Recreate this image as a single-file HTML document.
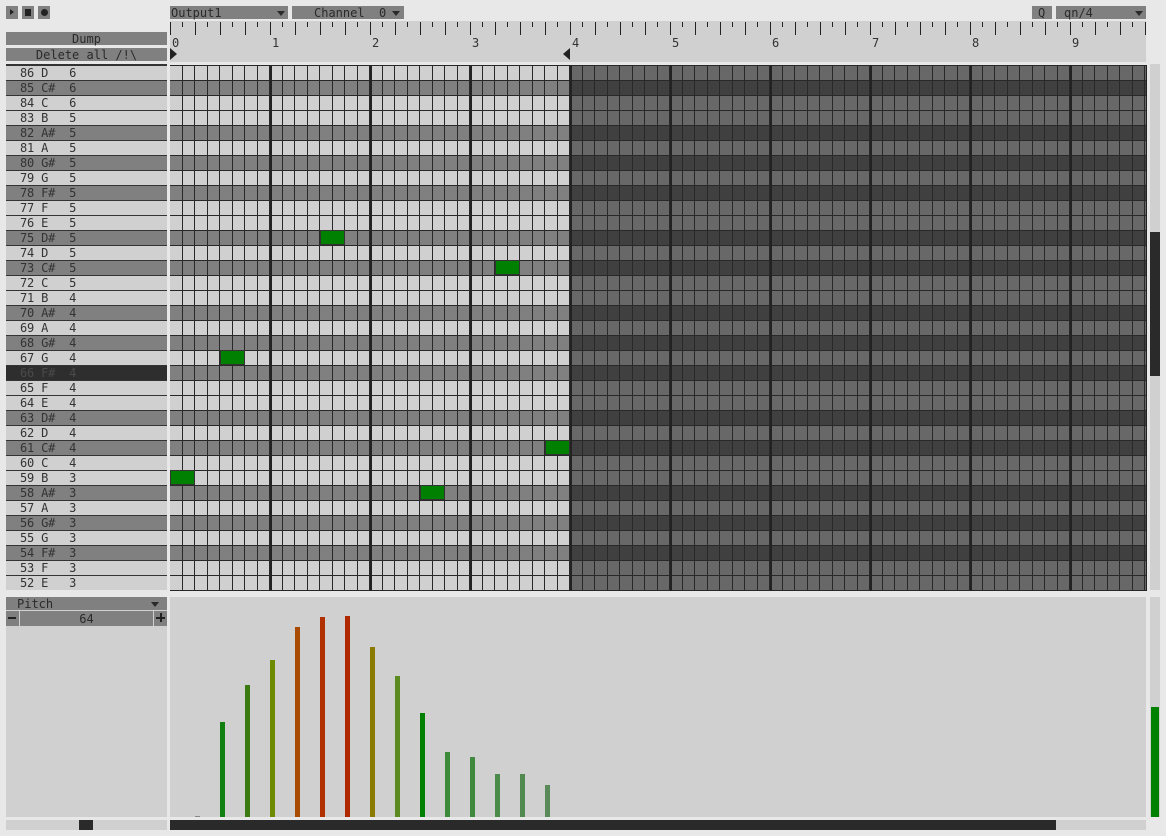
<!DOCTYPE html>
<html><head><meta charset="utf-8"><style>
*{margin:0;padding:0;box-sizing:border-box}
body{width:1166px;height:836px;background:#e8e8e8;position:relative;overflow:hidden;font-family:"DejaVu Sans Mono","Liberation Mono",monospace;font-size:12px;color:#333}
.a{position:absolute}
.btn{background:#808080;color:#2a2a2a;line-height:15px;white-space:pre}
.tri{position:absolute;width:0;height:0;border-left:4px solid transparent;border-right:4px solid transparent;border-top:5px solid #2a2a2a}
#labels div{height:15px;line-height:15px;border-top:1px solid #333;padding-left:14px;white-space:pre;letter-spacing:-0.2px}
.w{background:#d0d0d0}.b{background:#808080}.s{background:#2e2e2e;color:#4a4a4a}
#grid div{height:15px}
#grid .bl{position:absolute;top:0;width:2px;height:526px;background:#222}
.note{position:absolute;width:25px;height:16px;background:#008000;border:1px solid #333}
.bar{position:absolute;width:5px;bottom:19px}
</style></head><body>
<div class="a btn" style="left:6px;top:6px;width:12px;height:13px"><div class="a" style="left:4px;top:3px;border-top:3.5px solid transparent;border-bottom:3.5px solid transparent;border-left:4px solid #222"></div></div>
<div class="a btn" style="left:22px;top:6px;width:12px;height:13px"><div class="a" style="left:3px;top:3px;width:6px;height:7px;background:#222"></div></div>
<div class="a btn" style="left:38px;top:6px;width:12px;height:13px"><div class="a" style="left:3px;top:3px;width:7px;height:7px;border-radius:50%;background:#222"></div></div>
<div class="a btn" style="left:170px;top:6px;width:118px;height:13px;padding-left:1px">Output1</div><div class="tri" style="left:277px;top:11px"></div>
<div class="a btn" style="left:292px;top:6px;width:112px;height:13px;padding-left:22px">Channel  0</div><div class="tri" style="left:392px;top:11px"></div>
<div class="a btn" style="left:1032px;top:6px;width:20px;height:13px;padding-left:6px">Q</div>
<div class="a btn" style="left:1056px;top:6px;width:90px;height:13px;padding-left:8px">qn/4</div><div class="tri" style="left:1135px;top:11px"></div>
<div class="a btn" style="left:6px;top:32px;width:161px;height:13px;text-align:center">Dump</div>
<div class="a btn" style="left:6px;top:48px;width:161px;height:13px;text-align:center">Delete all /!\</div>
<div class="a" style="left:170px;top:21px;width:976px;height:41px;background:#d0d0d0"></div>
<div class="a" style="left:170px;top:22px;width:976px;height:5px;background:repeating-linear-gradient(90deg,#222 0 1px,transparent 1px 12px,#222 12px 13px,transparent 13px 25px)"></div>
<div class="a" style="left:170px;top:22px;width:976px;height:13px;background:repeating-linear-gradient(90deg,#222 0 1px,transparent 1px 25px)"></div>
<div class="a" style="left:172px;top:36px;width:976px;height:14px;white-space:pre"><span class="a" style="left:0">0</span><span class="a" style="left:100px">1</span><span class="a" style="left:200px">2</span><span class="a" style="left:300px">3</span><span class="a" style="left:400px">4</span><span class="a" style="left:500px">5</span><span class="a" style="left:600px">6</span><span class="a" style="left:700px">7</span><span class="a" style="left:800px">8</span><span class="a" style="left:900px">9</span></div>
<div class="a" style="left:170px;top:48px;border-top:6px solid transparent;border-bottom:6px solid transparent;border-left:7px solid #222"></div>
<div class="a" style="left:563px;top:48px;border-top:6px solid transparent;border-bottom:6px solid transparent;border-right:7px solid #222"></div>
<div class="a" style="left:6px;top:64px;width:161px;height:2px;background:#333"></div>
<div id="labels" class="a" style="left:6px;top:65px;width:161px">
<div class="w">86 D   6</div><div class="b">85 C#  6</div><div class="w">84 C   6</div><div class="w">83 B   5</div><div class="b">82 A#  5</div><div class="w">81 A   5</div><div class="b">80 G#  5</div><div class="w">79 G   5</div><div class="b">78 F#  5</div><div class="w">77 F   5</div><div class="w">76 E   5</div><div class="b">75 D#  5</div><div class="w">74 D   5</div><div class="b">73 C#  5</div><div class="w">72 C   5</div><div class="w">71 B   4</div><div class="b">70 A#  4</div><div class="w">69 A   4</div><div class="b">68 G#  4</div><div class="w">67 G   4</div><div class="s">66 F#  4</div><div class="w">65 F   4</div><div class="w">64 E   4</div><div class="b">63 D#  4</div><div class="w">62 D   4</div><div class="b">61 C#  4</div><div class="w">60 C   4</div><div class="w">59 B   3</div><div class="b">58 A#  3</div><div class="w">57 A   3</div><div class="b">56 G#  3</div><div class="w">55 G   3</div><div class="b">54 F#  3</div><div class="w">53 F   3</div><div class="w">52 E   3</div>
</div>
<div id="grid" class="a" style="left:170px;top:65px;width:976px;height:526px;overflow:hidden">
<div class="w"></div><div class="b"></div><div class="w"></div><div class="w"></div><div class="b"></div><div class="w"></div><div class="b"></div><div class="w"></div><div class="b"></div><div class="w"></div><div class="w"></div><div class="b"></div><div class="w"></div><div class="b"></div><div class="w"></div><div class="w"></div><div class="b"></div><div class="w"></div><div class="b"></div><div class="w"></div><div class="b"></div><div class="w"></div><div class="w"></div><div class="b"></div><div class="w"></div><div class="b"></div><div class="w"></div><div class="w"></div><div class="b"></div><div class="w"></div><div class="b"></div><div class="w"></div><div class="b"></div><div class="w"></div><div class="w"></div>
<div class="a" style="left:400px;top:0;width:576px;height:526px;background:rgba(0,0,0,0.5)"></div>
<div class="a" style="left:0;top:0;width:976px;height:526px;background:repeating-linear-gradient(180deg,#282828 0 1px,transparent 1px 15px),repeating-linear-gradient(90deg,transparent 0 12px,#282828 12px 13px,transparent 13px 24px,#282828 24px 25px)"></div>
<i class="bl" style="left:100px"></i><i class="bl" style="left:200px"></i><i class="bl" style="left:300px"></i><i class="bl" style="left:400px"></i><i class="bl" style="left:500px"></i><i class="bl" style="left:600px"></i><i class="bl" style="left:700px"></i><i class="bl" style="left:800px"></i><i class="bl" style="left:900px"></i>
<div class="note" style="left:150px;top:165px"></div>
<div class="note" style="left:325px;top:195px"></div>
<div class="note" style="left:50px;top:285px"></div>
<div class="note" style="left:375px;top:375px"></div>
<div class="note" style="left:0;top:405px"></div>
<div class="note" style="left:250px;top:420px"></div>
</div>
<div class="a" style="left:1146px;top:65px;width:1px;height:526px;background:#222"></div>
<div class="a" style="left:1150px;top:64px;width:10px;height:526px;background:#d0d0d0"></div>
<div class="a" style="left:1150px;top:232px;width:10px;height:144px;background:#2a2a2a"></div>
<div class="a" style="left:6px;top:597px;width:161px;height:220px;background:#d0d0d0"></div>
<div class="a btn" style="left:6px;top:597px;width:161px;height:13px;padding-left:11px">Pitch</div><div class="tri" style="left:151px;top:602px"></div>
<div class="a btn" style="left:6px;top:611px;width:13px;height:15px"><div class="a" style="left:2px;top:6px;width:8px;height:2px;background:#222"></div></div>
<div class="a btn" style="left:20px;top:611px;width:133px;height:15px;text-align:center;line-height:16px">64</div>
<div class="a btn" style="left:154px;top:611px;width:13px;height:15px"><div class="a" style="left:2px;top:6px;width:9px;height:2px;background:#222"></div><div class="a" style="left:5.5px;top:2px;width:2px;height:9px;background:#222"></div></div>
<div class="a" style="left:170px;top:597px;width:976px;height:220px;background:#d0d0d0;overflow:hidden">
<div class="bar" style="left:25px;height:1px;background:#888;bottom:0"></div>
<div class="bar" style="left:50px;bottom:0;height:95px;background:#108010"></div>
<div class="bar" style="left:75px;bottom:0;height:132px;background:#3a7a10"></div>
<div class="bar" style="left:100px;bottom:0;height:157px;background:#6e8a00"></div>
<div class="bar" style="left:125px;bottom:0;height:190px;background:#a84a00"></div>
<div class="bar" style="left:150px;bottom:0;height:200px;background:#b03000"></div>
<div class="bar" style="left:175px;bottom:0;height:201px;background:#b02800"></div>
<div class="bar" style="left:200px;bottom:0;height:170px;background:#8a7a00"></div>
<div class="bar" style="left:225px;bottom:0;height:141px;background:#5a8a20"></div>
<div class="bar" style="left:250px;bottom:0;height:104px;background:#008000"></div>
<div class="bar" style="left:275px;bottom:0;height:65px;background:#3a8a3a"></div>
<div class="bar" style="left:300px;bottom:0;height:60px;background:#408a40"></div>
<div class="bar" style="left:325px;bottom:0;height:43px;background:#4a8a4a"></div>
<div class="bar" style="left:350px;bottom:0;height:43px;background:#508a50"></div>
<div class="bar" style="left:375px;bottom:0;height:32px;background:#5a8a5a"></div>
</div>
<div class="a" style="left:1150px;top:597px;width:10px;height:220px;background:#d0d0d0"></div>
<div class="a" style="left:1151px;top:707px;width:8px;height:110px;background:#008000"></div>
<div class="a" style="left:6px;top:820px;width:161px;height:10px;background:#d0d0d0"></div>
<div class="a" style="left:79px;top:820px;width:14px;height:10px;background:#2a2a2a"></div>
<div class="a" style="left:170px;top:820px;width:976px;height:10px;background:#d0d0d0"></div>
<div class="a" style="left:170px;top:820px;width:886px;height:10px;background:#2a2a2a"></div>
</body></html>
